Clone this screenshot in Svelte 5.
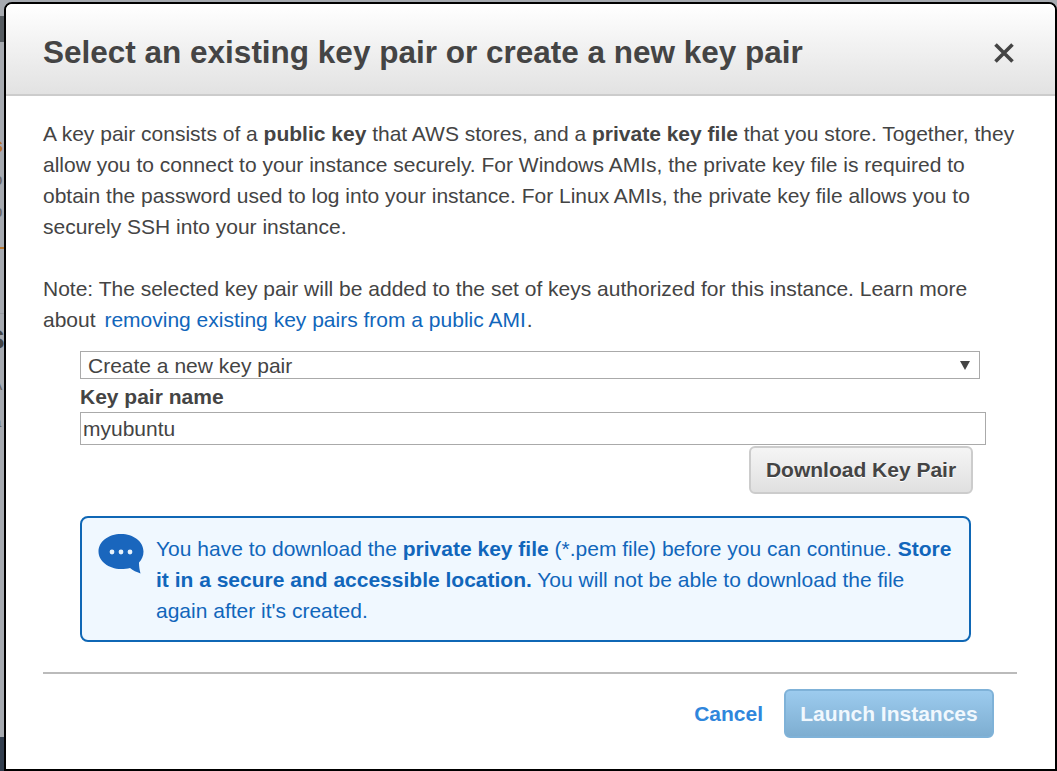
<script lang="ts">
  let keyName = $state('myubuntu');
</script>

<div class="backdrop">
  <!-- page behind the modal, only a sliver of it shows -->
  <div class="behind">
    <div class="behind-tab"></div>
    <div class="behind-o">s</div>
    <div class="behind-g g1">o</div>
    <div class="behind-g g2">p</div>
    <div class="behind-line"></div>
    <div class="behind-rule"></div>
    <div class="behind-s">S</div>
    <div class="behind-g g3">A</div>
    <div class="behind-g g4">a</div>
    <div class="behind-foot"></div>
  </div>

  <div class="modal">
    <header>
      <h1>Select an existing key pair or create a new key pair</h1>
      <button class="close" aria-label="Close">
        <svg width="22" height="22" viewBox="0 0 22 22">
          <path d="M2.5 2.5 L19.5 19.5 M19.5 2.5 L2.5 19.5" stroke="#444" stroke-width="3.6" fill="none" />
        </svg>
      </button>
    </header>

    <div class="body">
      <p>
        A key pair consists of a <b>public key</b> that AWS stores, and a <b>private key file</b> that you store. Together, they
        allow you to connect to your instance securely. For Windows AMIs, the private key file is required to
        obtain the password used to log into your instance. For Linux AMIs, the private key file allows you to
        securely SSH into your instance.
      </p>
      <p class="note">
        Note: The selected key pair will be added to the set of keys authorized for this instance. Learn more
        about <a href="#top">removing existing key pairs from a public AMI</a>.
      </p>

      <div class="form">
        <div class="select">
          <span>Create a new key pair</span>
          <i class="arrow"></i>
        </div>
        <label for="key-name">Key pair name</label>
        <input id="key-name" bind:value={keyName} />
        <div class="download-row">
          <button class="download">Download Key Pair</button>
        </div>
        <div class="info">
          <svg class="bubble" width="46" height="42" viewBox="0 0 46 42">
            <path d="M23 1 C35.500 1 45.500 8.500 45.500 18.500 C45.500 23 43.800 26.500 41 29.500 C41 33 41.500 37 42.500 40.500 C38.500 39 35 37.500 32 35 C29.500 35.700 26.500 36 23 36 C10.500 36 0.500 28 0.500 18.500 C0.500 8.500 10.500 1 23 1 Z" fill="#1a66bd" />
            <circle cx="14" cy="19" r="2.400" fill="#e8f2fb" />
            <circle cx="23" cy="19" r="2.400" fill="#e8f2fb" />
            <circle cx="32" cy="19" r="2.400" fill="#e8f2fb" />
          </svg>
          <p>
            You have to download the <b>private key file</b> (*.pem file) before you can continue. <b>Store
            it in a secure and accessible location.</b> You will not be able to download the file
            again after it's created.
          </p>
        </div>
      </div>
    </div>

    <footer>
      <a class="cancel" href="#top">Cancel</a>
      <button class="launch">Launch Instances</button>
    </footer>
  </div>
</div>

<style>
  :global(body) {
    margin: 0;
    background: #a6aab0;
  }

  .backdrop {
    position: relative;
    height: 771px;
    overflow: hidden;
    background: #a6aab0;
    font-family: "Liberation Sans", Arial, sans-serif;
  }

  .behind {
    position: absolute;
    inset: 0;
    color: #555;
  }
  .behind > div {
    position: absolute;
  }
  .behind-tab {
    left: 0;
    top: 16px;
    width: 4px;
    height: 26px;
    background: #555b60;
  }
  .behind-o {
    left: -8px;
    top: 134px;
    font-size: 20px;
    font-weight: bold;
    color: #b5762f;
  }
  .behind-g {
    font-size: 17px;
    left: -7px;
    color: #666;
  }
  .g1 { top: 170px; }
  .g2 { top: 202px; }
  .g3 { top: 375px; left: -9px; }
  .g4 { top: 413px; left: -7px; font-size: 15px; }
  .behind-line {
    left: 0;
    top: 247px;
    width: 4px;
    height: 2px;
    background: #b5762f;
  }
  .behind-rule {
    left: 0;
    top: 313px;
    width: 4px;
    height: 1px;
    background: #989ca2;
  }
  .behind-s {
    left: -14px;
    top: 324px;
    font-size: 28px;
    font-weight: bold;
    color: #444;
  }
  .behind-foot {
    left: 0;
    top: 737px;
    width: 4px;
    height: 34px;
    background: #323e4e;
  }

  .modal {
    position: absolute;
    left: 4px;
    top: 2px;
    width: 1049px;
    height: 765px;
    border: 2px solid #000;
    border-radius: 8px 8px 0 0;
    background: #fff;
    color: #444;
    display: flex;
    flex-direction: column;
  }

  header {
    height: 90px;
    box-sizing: content-box;
    border-bottom: 2px solid #ccc;
    border-radius: 6px 6px 0 0;
    background: linear-gradient(#fff, #e2e2e2);
    display: flex;
    align-items: center;
    justify-content: space-between;
    padding: 0 40px 0 37px;
  }

  h1 {
    margin: 0;
    font-size: 31.5px;
    font-weight: bold;
    color: #444;
    position: relative;
    top: 3px;
  }

  .close {
    border: 0;
    background: none;
    padding: 0;
    display: flex;
    position: relative;
    top: 4px;
  }

  .body {
    padding: 22px 39px 0 37px;
    flex: 1;
    font-size: 21px;
    line-height: 31px;
  }

  .body p {
    margin: 0;
  }

  .note {
    margin-top: 31px !important;
  }

  .note a {
    color: #1166bb;
    text-decoration: none;
    margin-left: 3px;
    margin-right: 1px;
  }

  .form {
    margin: 16px 0 0 37px;
  }

  .select {
    height: 26px;
    border: 1px solid #aaa;
    display: flex;
    align-items: center;
    justify-content: space-between;
    padding: 0 7px;
    box-sizing: content-box;
    width: 884px;
    line-height: 28px;
  }
  .select span {
    position: relative;
    top: 1px;
  }

  .arrow {
    width: 0;
    height: 0;
    margin-right: 2px;
    border-left: 5px solid transparent;
    border-right: 5px solid transparent;
    border-top: 9px solid #444;
  }

  label {
    display: block;
    font-weight: bold;
    line-height: 24px;
    margin-top: 6px;
  }

  input {
    display: block;
    width: 906px;
    height: 33px;
    margin-top: 3px;
    box-sizing: border-box;
    border: 1px solid #aaa;
    padding: 0 2px;
    font: inherit;
    color: #444;
    outline: none;
  }

  .download-row {
    display: flex;
    padding-left: 669px;
  }

  .download {
    width: 224px;
    height: 48px;
    margin-top: 1px;
    border: 2px solid #ccc;
    border-radius: 6px;
    background: linear-gradient(#f5f5f5, #e0e0e0);
    font: bold 21px "Liberation Sans", Arial, sans-serif;
    color: #444;
    text-shadow: 0 1px 0 #fff;
    padding: 0;
  }

  .info {
    width: 887px;
    height: 122px;
    margin-top: 22px;
    box-sizing: content-box;
    border: 2px solid #0f67b5;
    border-radius: 8px;
    background: #f0f8ff;
    color: #1166bb;
    display: flex;
    gap: 12px;
    padding: 0;
  }
  .bubble {
    flex: none;
    margin: 15px 0 0 16px;
  }
  .info p {
    padding-top: 15px;
    width: 800px;
  }

  footer {
    margin: 0 38px 0 37px;
    height: 80px;
    border-top: 2px solid #bbb;
    display: flex;
    align-items: flex-start;
    justify-content: flex-end;
    padding: 15px 23px 0 0;
    gap: 21px;
  }

  .cancel {
    font-size: 21px;
    font-weight: bold;
    color: #2f86dc;
    text-decoration: none;
    line-height: 50px;
  }

  .launch {
    width: 210px;
    height: 49px;
    border: 2px solid #7fb2d8;
    border-radius: 6px;
    background: linear-gradient(#9ccbee, #7eaed1);
    color: #f0f8fe;
    font: bold 21px "Liberation Sans", Arial, sans-serif;
    padding: 0;
    text-shadow: 0 1px 0 #8fb9d9;
  }
</style>
